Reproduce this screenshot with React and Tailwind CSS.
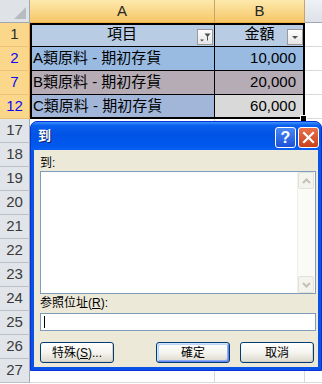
import React from 'react';

const rows = [
  { n: '1', num: 'text-[#2a2a2a]', a: '項目', b: '金額', aBg: 'bg-[#b8cce4]', bBg: 'bg-[#b8cce4]', head: true },
  { n: '2', num: 'text-[#0a0af5]', a: 'A類原料 - 期初存貨', b: '10,000', aBg: 'bg-[#99bbe2]', bBg: 'bg-[#99bbe2]' },
  { n: '7', num: 'text-[#0a0af5]', a: 'B類原料 - 期初存貨', b: '20,000', aBg: 'bg-[#b5acb5]', bBg: 'bg-[#b5acb5]' },
  { n: '12', num: 'text-[#0a0af5]', a: 'C類原料 - 期初存貨', b: '60,000', aBg: 'bg-[#a2b6d9]', bBg: 'bg-[#d9d9d9]' },
];

const emptyRows = ['17', '18', '19', '20', '21', '22', '23', '24', '25', '26', '27'];

function FilterButton() {
  return (
    <div className="absolute right-[1px] bottom-[1px] w-[16px] h-[16px] border border-[#9a9a9a] bg-gradient-to-b from-[#fdfdfd] to-[#e6e6e6]">
      <svg width="14" height="14" viewBox="0 0 14 14" className="block">
        <path d="M2 9.5 H6 L4 11.5 Z" fill="#505050" />
        <path d="M6.5 3.5 H12.5 L10 6.5 V10.5 H9 V6.5 Z" fill="#505050" />
      </svg>
    </div>
  );
}

function DropButton() {
  return (
    <div className="absolute right-[1px] bottom-[1px] w-[16px] h-[16px] border border-[#9a9a9a] bg-gradient-to-b from-[#fdfdfd] to-[#e6e6e6]">
      <svg width="14" height="14" viewBox="0 0 14 14" className="block">
        <path d="M4 6 H10 L7 9 Z" fill="#505050" />
      </svg>
    </div>
  );
}

function Chevron({ up }) {
  return (
    <svg width="9" height="6" viewBox="0 0 9 6" className="block">
      {up ? (
        <path d="M1 5 L4.5 1.5 L8 5" fill="none" stroke="#c4c2b4" strokeWidth="2" />
      ) : (
        <path d="M1 1 L4.5 4.5 L8 1" fill="none" stroke="#c4c2b4" strokeWidth="2" />
      )}
    </svg>
  );
}

function XpButton({ children, primary }) {
  return (
    <div
      className={
        'w-[74px] h-[21px] rounded-[3px] border border-[#003c74] bg-gradient-to-b from-[#ffffff] via-[#f5f4ef] to-[#dcd9cc] flex items-center justify-center text-[12px] leading-none text-black ' +
        (primary
          ? 'shadow-[inset_1px_1px_0_#cee7ff,inset_-1px_-1px_0_#6982ee,inset_2px_2px_0_#bcd4f6,inset_-2px_-2px_0_#89adf4]'
          : 'shadow-[inset_-1px_-1px_0_#d6d0c5]')
      }
    >
      {children}
    </div>
  );
}

export default function App() {
  return (
    <div className="relative w-[322px] h-[384px] overflow-hidden bg-white font-['Liberation_Sans','Noto_Sans_CJK_TC',sans-serif] text-black">
      {/* Column header row */}
      <div className="flex h-[23px]">
        <div className="relative w-[30px] shrink-0 border-r border-b border-[#9ea7b2] bg-[#dfe3e8]">
          <svg width="14" height="14" viewBox="0 0 14 14" className="absolute right-[2px] bottom-[2px]">
            <path d="M13 1 V13 H1 Z" fill="#b7bcc3" />
          </svg>
        </div>
        <div className="w-[185px] shrink-0 border-r border-b border-r-[#c7a46b] border-b-[#f0b446] bg-gradient-to-b from-[#fde9ad] to-[#f6c765] flex items-center justify-center text-[15px] text-[#262626]">
          A
        </div>
        <div className="w-[90px] shrink-0 border-r border-b border-r-[#c7a46b] border-b-[#f0b446] bg-gradient-to-b from-[#fde9ad] to-[#f6c765] flex items-center justify-center text-[15px] text-[#262626]">
          B
        </div>
        <div className="flex-1 border-b border-[#9ea7b2] bg-gradient-to-b from-[#eef1f5] to-[#dde2e8]" />
      </div>

      {/* Data rows */}
      {rows.map((r) => (
        <div key={r.n} className="flex h-[24px]">
          <div
            className={
              'w-[30px] shrink-0 border-r border-b border-r-[#e8a33c] border-b-[#ecc277] bg-[#fbd78c] flex items-center justify-center text-[15px] ' +
              r.num
            }
          >
            {r.n}
          </div>
          <div
            className={
              'relative w-[185px] shrink-0 border-r border-b border-black flex items-center text-[15px] ' +
              r.aBg +
              (r.head ? ' justify-center' : ' pl-[3px]')
            }
          >
            <span className="whitespace-nowrap">{r.a}</span>
            {r.head && <FilterButton />}
          </div>
          <div
            className={
              'relative w-[90px] shrink-0 border-r border-b border-black flex items-center text-[15px] ' +
              r.bBg +
              (r.head ? ' justify-center' : ' justify-end pr-[8px]')
            }
          >
            <span className="whitespace-nowrap">{r.b}</span>
            {r.head && <DropButton />}
          </div>
          <div className="flex-1 border-b border-[#d9d9d9]" />
        </div>
      ))}

      {emptyRows.map((n) => (
        <div key={n} className="flex h-[24px]">
          <div className="w-[30px] shrink-0 border-r border-b border-r-[#9ea7b2] border-b-[#b9c0c8] bg-[#e1e5ea] flex items-center justify-center text-[15px] text-[#3a3a3a]">
            {n}
          </div>
          <div className="w-[185px] shrink-0 border-r border-b border-[#d9d9d9]" />
          <div className="w-[90px] shrink-0 border-r border-b border-[#d9d9d9]" />
          <div className="flex-1 border-b border-[#d9d9d9]" />
        </div>
      ))}

      {/* Selection outline */}
      <div className="pointer-events-none absolute left-[30px] top-[23px] w-[275px] h-[96px] border-2 border-black" />
      <div className="pointer-events-none absolute left-[300px] top-[115px] w-[7px] h-[7px] bg-black border border-white" />

      {/* Dialog */}
      <div className="absolute left-[30px] top-[121px] w-[292px] h-[250px] flex flex-col rounded-t-[7px] border border-[#0831d9] bg-[#0a52e6]">
        <div className="h-[28px] shrink-0 rounded-t-[6px] bg-[linear-gradient(to_bottom,#3d95ff_0%,#0a5fec_12%,#0053e6_45%,#0058ee_85%,#0b60f2_100%)] flex items-start">
          <div className="pl-[7px] pt-[6px] text-[13px] leading-[16px] font-bold text-white [text-shadow:1px_1px_0_#0a1e6e]">
            到
          </div>
          <div className="flex-1" />
          <div className="mt-[5px] w-[21px] h-[21px] rounded-[3px] border border-white bg-gradient-to-b from-[#4a88f6] to-[#1e50d6] flex items-center justify-center text-white font-bold text-[16px] leading-none">
            ?
          </div>
          <div className="ml-[2px] mr-[2px] mt-[5px] w-[21px] h-[21px] rounded-[3px] border border-white bg-gradient-to-b from-[#e8704a] to-[#c8401a] flex items-center justify-center">
            <svg width="13" height="13" viewBox="0 0 13 13" className="block">
              <path d="M2 2 L11 11 M11 2 L2 11" stroke="#ffffff" strokeWidth="2.2" strokeLinecap="square" />
            </svg>
          </div>
        </div>
        <div className="flex-1 mx-[3px] mb-[3px] bg-[#ece9d8] flex flex-col pl-[6px] pr-[2px] pt-[5px] text-[12px]">
          <div className="h-[16px] leading-[16px]">到:</div>
          <div className="h-[123px] border border-[#7f9db9] bg-white flex justify-end">
            <div className="w-[17px] mr-[1px] flex flex-col justify-between bg-[#fafaf7] border-l border-[#f0efe8]">
              <div className="h-[17px] rounded-[2px] border border-[#e3e2d9] bg-[#f4f3ee] flex items-center justify-center">
                <Chevron up />
              </div>
              <div className="h-[17px] rounded-[2px] border border-[#e3e2d9] bg-[#f4f3ee] flex items-center justify-center">
                <Chevron />
              </div>
            </div>
          </div>
          <div className="h-[16px] leading-[16px] mt-[1px]">
            参照位址(<span className="underline">R</span>):
          </div>
          <div className="mt-[2px] h-[18px] border border-[#7f9db9] bg-white flex items-center pl-[3px]">
            <div className="w-[1px] h-[12px] bg-black" />
          </div>
          <div className="mt-[11px] flex pr-[2px]">
            <XpButton>
              特殊(<span className="underline">S</span>)...
            </XpButton>
            <div className="flex-1" />
            <XpButton primary>確定</XpButton>
            <div className="w-[10px]" />
            <XpButton>取消</XpButton>
          </div>
        </div>
      </div>
    </div>
  );
}
